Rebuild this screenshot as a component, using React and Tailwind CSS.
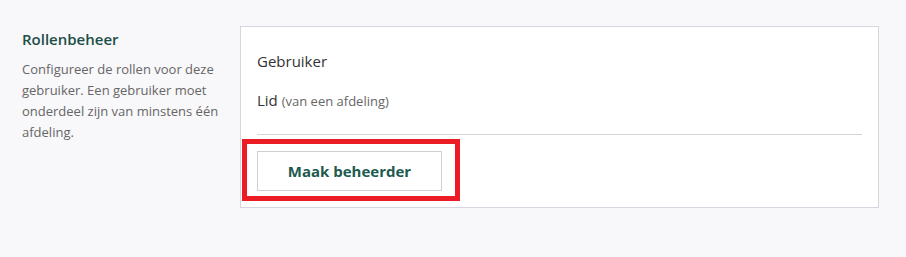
const font = { fontFamily: '"Open Sans", "Noto Sans", sans-serif' };

const RoleSettings = () => {
  return (
    <div
      className="flex h-[257px] w-[906px] items-start bg-[#f8f8fa] pl-[22px] pt-[26px]"
      style={font}
    >
      <div className="w-[218px] shrink-0 pt-[3px]">
        <h2 className="text-[15px] font-semibold leading-[20px] text-[#1d4f48]">
          Rollenbeheer
        </h2>
        <p className="mt-[10px] text-[13px] leading-[21px] text-[#666666]">
          Configureer de rollen voor deze gebruiker. Een gebruiker moet
          onderdeel zijn van minstens één afdeling.
        </p>
      </div>

      <div className="w-[639px] border border-[#d6d6de] bg-white px-[16px] pb-[16px]">
        <div className="pt-[23px] text-[15px] leading-[22px] text-[#333333]">
          Gebruiker
        </div>
        <div className="mt-[17px] text-[15px] leading-[22px] text-[#333333]">
          Lid{" "}
          <span className="text-[13px] text-[#666666]">(van een afdeling)</span>
        </div>
        <div className="mt-[22px] h-px bg-[#d4d4d8]" />

        <div className="relative pt-[16px]">
          <button className="h-[40px] w-[185px] border border-[#cfcfd4] bg-white text-[15px] font-bold text-[#1d5a4f]">
            Maak beheerder
          </button>
          <div className="pointer-events-none absolute left-[-15px] top-[4px] h-[62px] w-[218px] border-[5px] border-[#ec1c24]" />
        </div>
      </div>
    </div>
  );
};

export default function App() {
  return <RoleSettings />;
}
